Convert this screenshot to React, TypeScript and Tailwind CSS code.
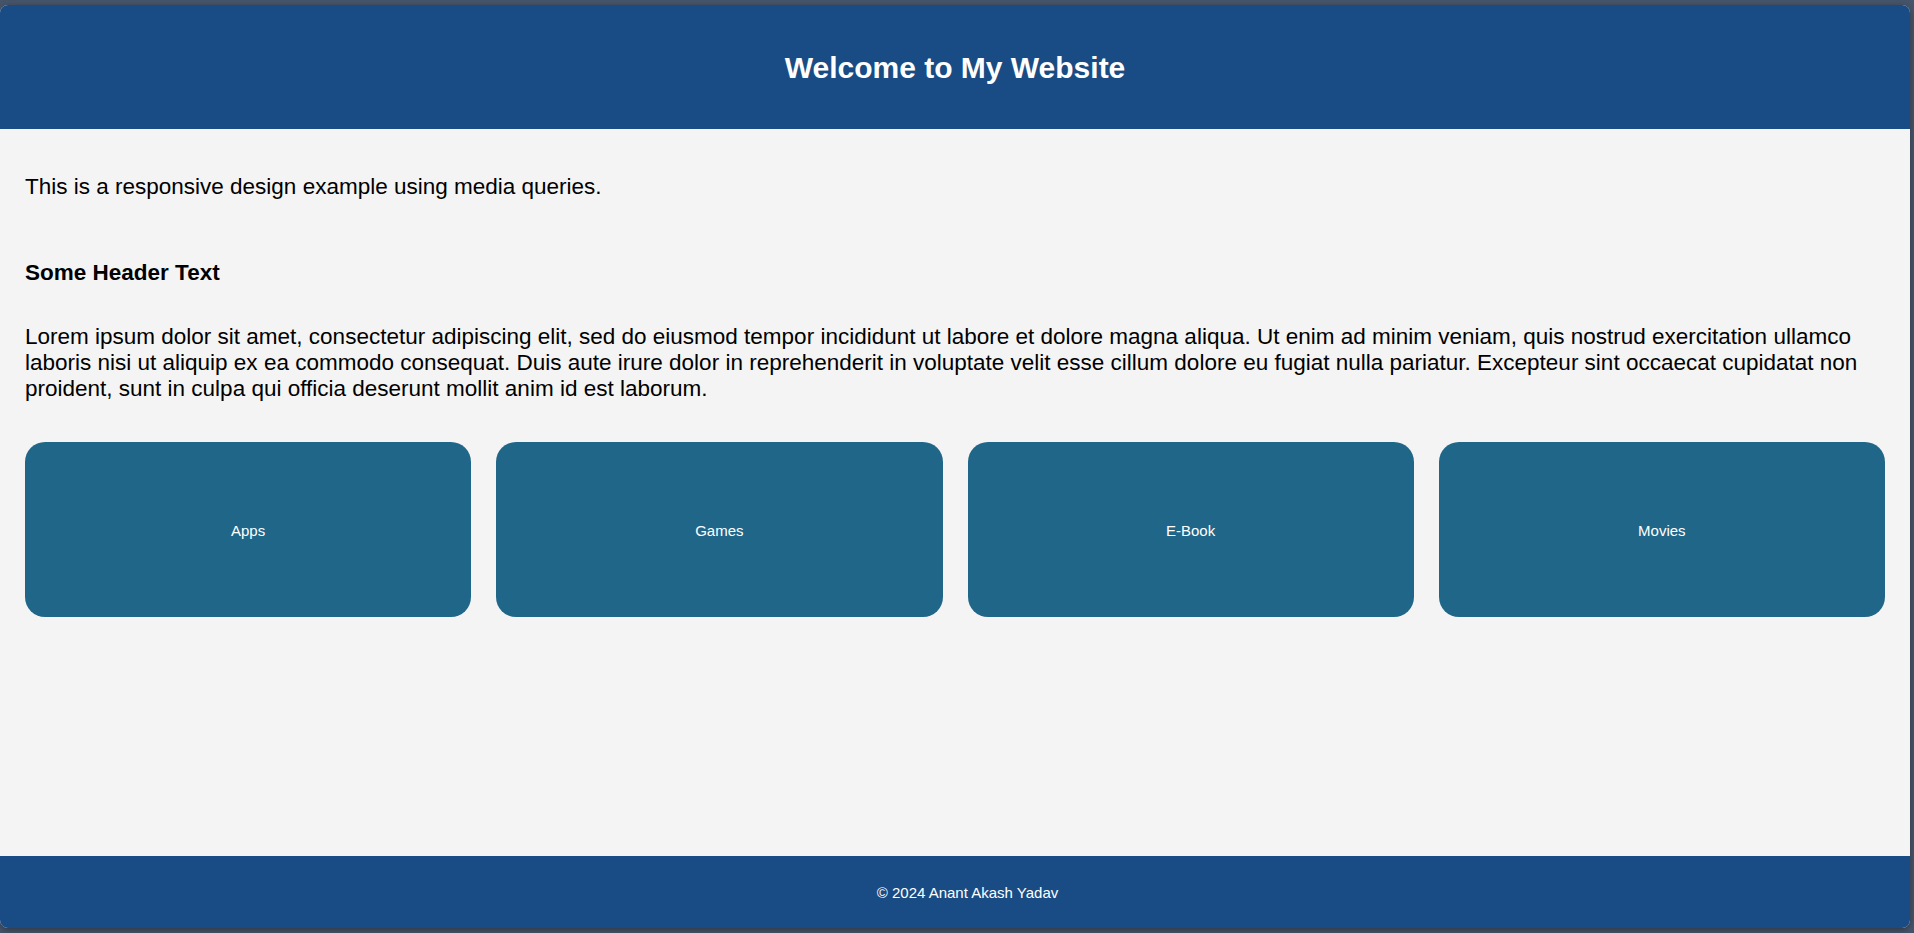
const CARDS = ["Apps", "Games", "E-Book", "Movies"];

export default function App() {
  return (
    <div className="h-screen bg-[#46546a] pt-[5px] pr-[4px] pb-[5px] font-['Liberation_Sans',Arial,sans-serif] text-black">
      <div className="h-full flex flex-col rounded-lg overflow-hidden bg-[#f4f4f4] shadow-[0_2px_6px_rgba(0,0,0,0.35)]">
        <header className="h-[124px] shrink-0 bg-[#194c84] flex items-center justify-center">
          <h1 className="text-[30px] font-bold text-white">Welcome to My Website</h1>
        </header>

        <main className="flex-1 px-[25px] pt-[45px]">
          <p className="text-[22.5px] leading-[26px]">
            This is a responsive design example using media queries.
          </p>
          <h3 className="mt-[60px] text-[22.5px] leading-[26px] font-bold">Some Header Text</h3>
          <p className="mt-[38px] text-[22.5px] leading-[26px]">
            Lorem ipsum dolor sit amet, consectetur adipiscing elit, sed do eiusmod tempor incididunt ut labore et
            dolore magna aliqua. Ut enim ad minim veniam, quis nostrud exercitation ullamco laboris nisi ut aliquip ex
            ea commodo consequat. Duis aute irure dolor in reprehenderit in voluptate velit esse cillum dolore eu fugiat
            nulla pariatur. Excepteur sint occaecat cupidatat non proident, sunt in culpa qui officia deserunt mollit
            anim id est laborum.
          </p>
          <div className="mt-[40px] grid grid-cols-4 gap-[25px]">
            {CARDS.map((c) => (
              <div
                key={c}
                className="h-[175px] pt-[4px] rounded-[20px] bg-[#206689] flex items-center justify-center text-[15px] text-white"
              >
                {c}
              </div>
            ))}
          </div>
        </main>

        <footer className="h-[72px] shrink-0 pt-[2px] pl-[25px] bg-[#194c84] flex items-center justify-center text-[15px] text-white">
          © 2024 Anant Akash Yadav
        </footer>
      </div>
    </div>
  );
}
